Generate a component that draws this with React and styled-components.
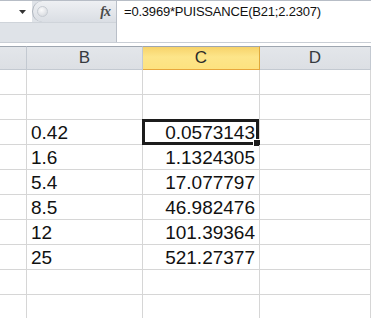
import React from "react";
import styled, { createGlobalStyle } from "styled-components";

const GlobalStyle = createGlobalStyle`
  html, body {
    margin: 0;
    padding: 0;
    background: #ffffff;
  }
`;

const Sheet = styled.div`
  width: 371px;
  height: 318px;
  overflow: hidden;
  background: #ffffff;
  font-family: "Liberation Sans", Arial, sans-serif;
`;

// formula bar: name box + fx pill on the left, formula text on the right
const FormulaBar = styled.div`
  display: flex;
  height: 43px;
  box-sizing: border-box;
  border-top: 1px solid #b7bdc6;
  border-bottom: 1px solid #c9ced5;
`;

const LeftPanel = styled.div`
  width: 116px;
  display: flex;
  flex-direction: column;
  background: #dfe3e8;
  border-right: 1px solid #b9bfc8;
`;

const TopStrip = styled.div`
  display: flex;
  height: 21px;
  border-bottom: 1px solid #cfd4da;
`;

const NameBox = styled.div`
  width: 32px;
  display: flex;
  align-items: center;
  justify-content: flex-end;
  padding-right: 6px;
  box-sizing: border-box;
  background: #ffffff;
`;

const Pill = styled.div`
  flex: 1;
  display: flex;
  align-items: center;
  justify-content: space-between;
  padding: 0 6px 0 4px;
  border-radius: 11px 0 0 11px;
  border-left: 1px solid #aeb4bd;
  background: linear-gradient(#eef0f3, #dadee4);
`;

const Dimple = styled.span`
  width: 9px;
  height: 9px;
  border-radius: 50%;
  background: radial-gradient(circle at 40% 35%, #fbfbfc, #cfd3d9);
  border: 1px solid #c6cbd2;
`;

const Fx = styled.span`
  font-family: "Liberation Serif", "Times New Roman", serif;
  font-style: italic;
  font-weight: bold;
  font-size: 14px;
  color: #4a4a4a;
  letter-spacing: -1px;
`;

const Formula = styled.div`
  flex: 1;
  padding: 3px 0 0 7px;
  font-size: 13px;
  letter-spacing: -0.2px;
  color: #111111;
  background: #ffffff;
`;

const Gap = styled.div`
  height: 3px;
  background: #ffffff;
`;

const Grid = styled.div`
  display: grid;
  grid-template-columns: 27px 116px 117px 1fr;
`;

const HeadCell = styled.div`
  height: 24px;
  box-sizing: border-box;
  display: flex;
  align-items: center;
  justify-content: center;
  font-size: 17px;
  color: ${(p) => (p.$active ? "#2a2a2a" : "#363a40")};
  border-top: 1px solid #9ea6b0;
  border-right: 1px solid ${(p) => (p.$active ? "#e0a93a" : "#c3c9d1")};
  border-bottom: 1px solid ${(p) => (p.$active ? "#e8a73c" : "#c3c9d1")};
  background: ${(p) =>
    p.$active
      ? "linear-gradient(#f7d36a, #fde58a 45%, #fde27f)"
      : "linear-gradient(#e3e6ea, #dcdfe4)"};
`;

const Cell = styled.div`
  position: relative;
  height: 25px;
  box-sizing: border-box;
  padding: 0 ${(p) => (p.$right ? "4px" : "0")} 0 ${(p) => (p.$right ? "0" : "4px")};
  text-align: ${(p) => (p.$right ? "right" : "left")};
  font-size: 19px;
  line-height: 25px;
  color: #111111;
  border-right: 1px solid #d6d6d6;
  border-bottom: 1px solid #d6d6d6;
  white-space: nowrap;
`;

const Selection = styled.div`
  position: absolute;
  left: -1px;
  top: -1px;
  right: 0;
  bottom: -1px;
  border: 3px solid #1c1c1c;
  pointer-events: none;
`;

const Handle = styled.div`
  position: absolute;
  right: -5px;
  bottom: -5px;
  width: 6px;
  height: 6px;
  background: #1c1c1c;
  border: 1px solid #ffffff;
`;

const rows = [
  ["", ""],
  ["", ""],
  ["0.42", "0.0573143"],
  ["1.6", "1.1324305"],
  ["5.4", "17.077797"],
  ["8.5", "46.982476"],
  ["12", "101.39364"],
  ["25", "521.27377"],
  ["", ""],
  ["", ""],
];

const App = () => {
  return (
    <Sheet>
      <GlobalStyle />
      <FormulaBar>
        <LeftPanel>
          <TopStrip>
            <NameBox>
              <svg width="7" height="4" viewBox="0 0 7 4">
                <path d="M0 0 H7 L3.5 4 Z" fill="#333" />
              </svg>
            </NameBox>
            <Pill>
              <Dimple />
              <Fx>fx</Fx>
            </Pill>
          </TopStrip>
        </LeftPanel>
        <Formula>=0.3969*PUISSANCE(B21;2.2307)</Formula>
      </FormulaBar>
      <Gap />
      <Grid>
        <HeadCell />
        <HeadCell>B</HeadCell>
        <HeadCell $active>C</HeadCell>
        <HeadCell>D</HeadCell>
        {rows.map(([b, c], i) => (
          <React.Fragment key={i}>
            <Cell />
            <Cell>{b}</Cell>
            <Cell $right>
              {c}
              {i === 2 && (
                <Selection>
                  <Handle />
                </Selection>
              )}
            </Cell>
            <Cell />
          </React.Fragment>
        ))}
      </Grid>
    </Sheet>
  );
};

export default App;
